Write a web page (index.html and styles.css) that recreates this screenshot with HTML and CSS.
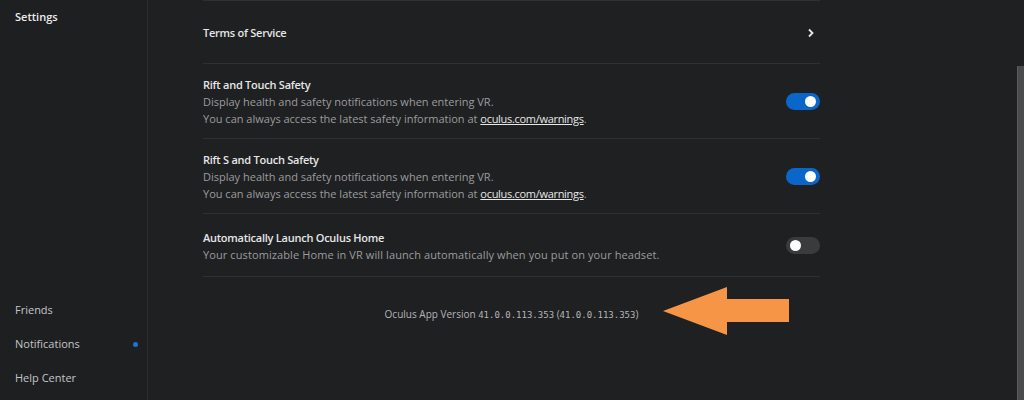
FILE: index.html
```html
<!DOCTYPE html>
<html lang="en">

<head>
    <meta charset="UTF-8">
    <meta name="viewport" content="width=device-width, initial-scale=1.0">
    <title>Settings</title>
    <link rel="stylesheet" href="styles.css">
</head>

<body>
    <div class="app">
        <nav class="sidebar">
            <div class="nav-item active">Settings</div>
            <div class="nav-bottom">
                <div class="nav-item">Friends</div>
                <div class="nav-item">Notifications <span class="dot"></span></div>
                <div class="nav-item">Help Center</div>
            </div>
        </nav>
        <main class="main">
            <div class="list">
                <div class="row short">
                    <div class="row-text">
                        <div class="title">Terms of Service</div>
                    </div>
                    <svg class="chevron" width="8" height="10" viewBox="0 0 8 10">
                        <path d="M2 1.5 L5.5 5 L2 8.5" fill="none" stroke="#e6e6e6" stroke-width="1.8" />
                    </svg>
                </div>
                <div class="row">
                    <div class="row-text">
                        <div class="title">Rift and Touch Safety</div>
                        <div class="desc">Display health and safety notifications when entering VR.</div>
                        <div class="desc">You can always access the latest safety information at <a href="#">oculus.com/warnings</a>.</div>
                    </div>
                    <span class="toggle on"></span>
                </div>
                <div class="row">
                    <div class="row-text">
                        <div class="title">Rift S and Touch Safety</div>
                        <div class="desc">Display health and safety notifications when entering VR.</div>
                        <div class="desc">You can always access the latest safety information at <a href="#">oculus.com/warnings</a>.</div>
                    </div>
                    <span class="toggle on"></span>
                </div>
                <div class="row short">
                    <div class="row-text">
                        <div class="title">Automatically Launch Oculus Home</div>
                        <div class="desc wide">Your customizable Home in VR will launch automatically when you put on your headset.</div>
                    </div>
                    <span class="toggle"></span>
                </div>
            </div>
            <div class="version">Oculus App Version <span class="num">41.0.0.113.353</span> (<span class="num">41.0.0.113.353</span>)</div>

            <!-- annotation arrow -->
            <svg class="arrow" width="128" height="50" viewBox="0 0 128 50">
                <polygon points="0,24 64,0 64,12 126,12 126,35 64,35 64,48" fill="#f79547" />
            </svg>
        </main>
        <div class="scrollbar"><div class="thumb"></div></div>
    </div>
</body>

</html>
```

FILE: styles.css
```css
html,
body {
    margin: 0;
    height: 100%;
    background-color: #1f2022;
    font-family: "Open Sans", "Noto Sans", sans-serif;
    font-size: 11px;
    color: #e6e6e6;
}

.app {
    display: flex;
    height: 400px;
    overflow: hidden;
}

.sidebar {
    width: 147px;
    flex-shrink: 0;
    border-right: 1px solid #2b2c2e;
    background-color: #1e1f21;
    display: flex;
    flex-direction: column;
}

.nav-item {
    padding: 0 15px;
    height: 34px;
    line-height: 34px;
    color: #c4c5c7;
    position: relative;
}

.nav-item.active {
    color: #ececec;
    font-weight: 600;
}

.nav-bottom {
    margin-top: auto;
    padding-bottom: 5px;
}

.dot {
    position: absolute;
    right: 9px;
    top: 15px;
    width: 5px;
    height: 5px;
    border-radius: 50%;
    background-color: #1a74e0;
}

.main {
    flex: 1;
    position: relative;
    padding-left: 55px;
}

.list {
    width: 617px;
    border-top: 1px solid #2f3032;
}

.row {
    display: flex;
    align-items: center;
    min-height: 75px;
    padding: 12px 0 11px;
    box-sizing: border-box;
    border-bottom: 1px solid #2f3032;
}

.row.short {
    min-height: 63px;
}

.row-text {
    flex: 1;
    line-height: 17px;
}

.title {
    font-weight: 600;
    color: #e6e6e6;
    letter-spacing: -0.25px;
}

.desc {
    color: #9b9c9e;
}

.desc.wide {
    letter-spacing: 0.1px;
}

.desc a {
    color: #e8e8e8;
    text-decoration: underline;
    letter-spacing: -0.3px;
}

.chevron {
    margin-right: 5px;
}

.toggle {
    width: 34px;
    height: 17px;
    border-radius: 9px;
    background-color: #3a3b3d;
    position: relative;
    flex-shrink: 0;
}

.toggle::after {
    content: "";
    position: absolute;
    top: 3px;
    left: 4px;
    width: 11px;
    height: 11px;
    border-radius: 50%;
    background-color: #fff;
}

.toggle.on {
    background-color: #0b66c9;
}

.toggle.on::after {
    left: 19px;
}

.version {
    width: 617px;
    text-align: center;
    padding-top: 30px;
    font-size: 10px;
    color: #b4b5b7;
}

.num {
    font-family: "DejaVu Sans Mono", monospace;
    font-size: 9px;
}

.arrow {
    position: absolute;
    left: 515px;
    top: 287px;
}

.scrollbar {
    width: 8px;
    flex-shrink: 0;
    position: relative;
}

.thumb {
    position: absolute;
    top: 66px;
    bottom: 0;
    left: 1px;
    right: 0;
    background-color: #4a4b4d;
    border-left: 1px solid #5a5b5d;
}
```
